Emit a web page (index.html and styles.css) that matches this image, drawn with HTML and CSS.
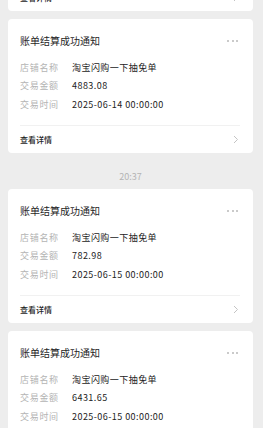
FILE: index.html
```html
<!DOCTYPE html>
<html lang="zh-CN">
<head>
<meta charset="utf-8">
<link rel="stylesheet" href="styles.css">
</head>
<body>
<div class="feed">
  <div class="card partial">
    <div class="foot"><span class="link">查看详情</span><svg class="chev" width="6" height="9" viewBox="0 0 6 9"><polyline points="1,1 4.5,4.5 1,8" fill="none" stroke="#c4c4c4" stroke-width="1"/></svg></div>
  </div>

  <div class="card">
    <div class="head"><span class="title">账单结算成功通知</span><span class="more"><i></i><i></i><i></i></span></div>
    <div class="rows">
      <div class="row"><span class="label">店铺名称</span><span class="value">淘宝闪购一下抽免单</span></div>
      <div class="row"><span class="label">交易金额</span><span class="value">4883.08</span></div>
      <div class="row"><span class="label">交易时间</span><span class="value">2025-06-14 00:00:00</span></div>
    </div>
    <div class="foot"><span class="link">查看详情</span><svg class="chev" width="6" height="9" viewBox="0 0 6 9"><polyline points="1,1 4.5,4.5 1,8" fill="none" stroke="#c4c4c4" stroke-width="1"/></svg></div>
  </div>

  <div class="time">20:37</div>

  <div class="card">
    <div class="head"><span class="title">账单结算成功通知</span><span class="more"><i></i><i></i><i></i></span></div>
    <div class="rows">
      <div class="row"><span class="label">店铺名称</span><span class="value">淘宝闪购一下抽免单</span></div>
      <div class="row"><span class="label">交易金额</span><span class="value">782.98</span></div>
      <div class="row"><span class="label">交易时间</span><span class="value">2025-06-15 00:00:00</span></div>
    </div>
    <div class="foot"><span class="link">查看详情</span><svg class="chev" width="6" height="9" viewBox="0 0 6 9"><polyline points="1,1 4.5,4.5 1,8" fill="none" stroke="#c4c4c4" stroke-width="1"/></svg></div>
  </div>

  <div class="card">
    <div class="head"><span class="title">账单结算成功通知</span><span class="more"><i></i><i></i><i></i></span></div>
    <div class="rows">
      <div class="row"><span class="label">店铺名称</span><span class="value">淘宝闪购一下抽免单</span></div>
      <div class="row"><span class="label">交易金额</span><span class="value">6431.65</span></div>
      <div class="row"><span class="label">交易时间</span><span class="value">2025-06-15 00:00:00</span></div>
    </div>
    <div class="foot"><span class="link">查看详情</span><svg class="chev" width="6" height="9" viewBox="0 0 6 9"><polyline points="1,1 4.5,4.5 1,8" fill="none" stroke="#c4c4c4" stroke-width="1"/></svg></div>
  </div>
</div>
</body>
</html>
```

FILE: styles.css
```css
html, body {
  margin: 0;
  padding: 0;
  background: #ededed;
  overflow: hidden;
  height: 428px;
}
body {
  font-family: "Noto Sans CJK SC", "Noto Sans", sans-serif;
  color: #333;
}
.feed {
  display: flex;
  flex-direction: column;
  gap: 8px;
  margin-top: -17px;
  padding: 0 10px 0 8px;
}
.card {
  background: #fff;
  border-radius: 4px;
  height: 134px;
  box-sizing: border-box;
  padding: 15px 13px 0 12px;
  display: flex;
  flex-direction: column;
}
.card.partial {
  height: 28px;
  padding-top: 0;
  border-radius: 0 0 4px 4px;
}
.head {
  display: flex;
  justify-content: space-between;
  align-items: center;
  height: 14px;
}
.title {
  font-size: 10px;
  line-height: 14px;
  color: #1f1f1f;
}
.more {
  display: flex;
  gap: 2.5px;
  padding-right: 2px;
}
.more i {
  display: block;
  width: 2px;
  height: 2px;
  background: #b8b8b8;
  border-radius: 1px;
}
.rows {
  margin-top: 10px;
  display: flex;
  flex-direction: column;
  border-bottom: 1px solid #f1f1f1;
  padding-bottom: 11px;
}
.row {
  display: flex;
  height: 18.5px;
  align-items: center;
  font-size: 9px;
}
.label {
  width: 52px;
  color: #b4b4b4;
  letter-spacing: 0.7px;
}
.value {
  color: #222;
  letter-spacing: 0.45px;
}
.foot {
  flex: 1;
  display: flex;
  justify-content: space-between;
  align-items: center;
  padding-right: 1px;
}
.link {
  font-size: 8px;
  color: #262626;
  font-weight: 500;
}
.chev {
  display: block;
}
.time {
  text-align: center;
  font-size: 9px;
  line-height: 14px;
  color: #b4b4b4;
  margin: 9px 0 -3px;
}
```
